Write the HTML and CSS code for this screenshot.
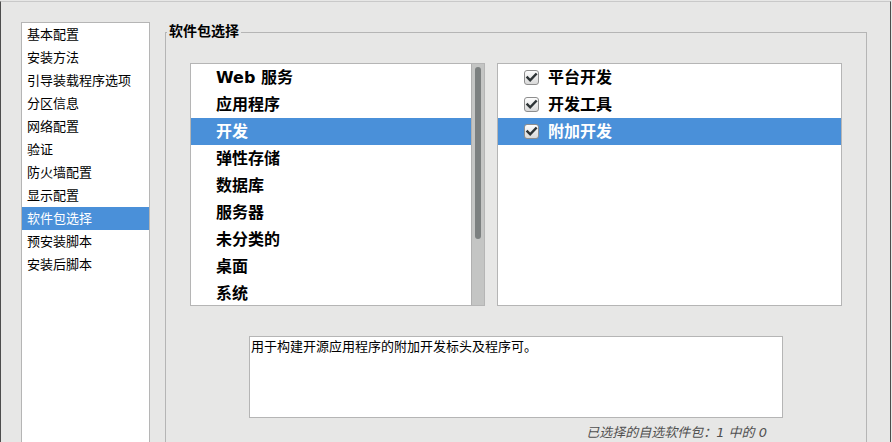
FILE: index.html
```html
<!DOCTYPE html>
<html lang="zh-CN">
<head>
<meta charset="utf-8">
<title>软件包选择</title>
<link rel="stylesheet" href="styles.css">
</head>
<body>
<div class="window">
  <ul class="nav">
    <li>基本配置</li>
    <li>安装方法</li>
    <li>引导装载程序选项</li>
    <li>分区信息</li>
    <li>网络配置</li>
    <li>验证</li>
    <li>防火墙配置</li>
    <li>显示配置</li>
    <li class="active">软件包选择</li>
    <li>预安装脚本</li>
    <li>安装后脚本</li>
  </ul>
  <div class="group">
    <div class="legend">软件包选择</div>
    <div class="lists">
      <div class="listbox groups">
        <ul class="items">
          <li>Web 服务</li>
          <li>应用程序</li>
          <li class="active">开发</li>
          <li>弹性存储</li>
          <li>数据库</li>
          <li>服务器</li>
          <li>未分类的</li>
          <li>桌面</li>
          <li>系统</li>
        </ul>
        <div class="scrollbar"><div class="thumb"></div></div>
      </div>
      <ul class="listbox options">
        <li><span class="check"><svg viewBox="0 0 13 13" width="13" height="13"><path d="M2.5 6.5 L5.2 9.3 L10.8 3.4" fill="none" stroke="#2e3436" stroke-width="2.5" stroke-linecap="square"/></svg></span>平台开发</li>
        <li><span class="check"><svg viewBox="0 0 13 13" width="13" height="13"><path d="M2.5 6.5 L5.2 9.3 L10.8 3.4" fill="none" stroke="#2e3436" stroke-width="2.5" stroke-linecap="square"/></svg></span>开发工具</li>
        <li class="active"><span class="check"><svg viewBox="0 0 13 13" width="13" height="13"><path d="M2.5 6.5 L5.2 9.3 L10.8 3.4" fill="none" stroke="#2e3436" stroke-width="2.5" stroke-linecap="square"/></svg></span>附加开发</li>
      </ul>
    </div>
    <div class="desc">用于构建开源应用程序的附加开发标头及程序可。</div>
    <div class="count">已选择的自选软件包：1 中的 0</div>
  </div>
</div>
</body>
</html>
```
FILE: styles.css
```css
html, body {
  margin: 0;
  padding: 0;
  background: #e7e7e6;
}
body {
  width: 892px;
  height: 442px;
  overflow: hidden;
  font-family: "DejaVu Sans", "Noto Sans CJK SC", sans-serif;
  color: #000;
}
.window {
  box-sizing: border-box;
  width: 891px;
  height: 441px;
  margin-top: 1px;
  border-top: 1px solid #c9c9c9;
  border-left: 1px solid #4d4d4d;
  border-right: 1px solid #4d4d4d;
  padding-left: 20px;
  display: flex;
  align-items: flex-start;
  overflow: hidden;
}
.nav {
  list-style: none;
  margin: 20px 0 0;
  padding: 0;
  width: 127px;
  height: 440px;
  flex: none;
  background: #fff;
  border: 1px solid #b5b5b5;
  font-family: "Noto Sans CJK SC", sans-serif;
  font-size: 13px;
}
.nav li {
  box-sizing: border-box;
  height: 23px;
  line-height: 21px;
  padding-left: 5px;
  white-space: nowrap;
}
.nav li.active {
  background: #4a90d9;
  color: #fff;
}
.group {
  position: relative;
  flex: none;
  width: 652px;
  height: 440px;
  margin: 30px 0 0 15px;
  padding: 30px 24px 0;
  border: 1px solid #b5b5b5;
}
.legend {
  position: absolute;
  top: -11px;
  left: 1px;
  padding: 0 2px;
  background: #e7e7e6;
  font-family: "Noto Sans CJK SC", sans-serif;
  font-weight: bold;
  font-size: 14px;
  line-height: 17px;
}
.lists {
  display: flex;
  gap: 12px;
  height: 243px;
}
.listbox {
  box-sizing: border-box;
  height: 243px;
  background: #fff;
  border: 1px solid #b5b5b5;
  margin: 0;
  padding: 0;
  list-style: none;
}
.groups {
  width: 295px;
  display: flex;
}
.items {
  flex: 1;
  list-style: none;
  margin: 0;
  padding: 0;
  font-weight: bold;
  font-size: 16px;
}
.items li,
.options li {
  height: 27px;
  line-height: 27px;
  white-space: nowrap;
}
.items li {
  padding-left: 25px;
}
.items li.active,
.options li.active {
  background: #4a90d9;
  color: #fff;
}
.scrollbar {
  flex: none;
  width: 12px;
  border-left: 1px solid #b0b0b0;
  background: #c4c5c4;
  padding-top: 3px;
  box-sizing: content-box;
}
.thumb {
  width: 6px;
  height: 172px;
  margin-left: 3px;
  border-radius: 3px;
  background: #7c8080;
}
.options {
  width: 345px;
  font-weight: bold;
  font-size: 16px;
}
.options li {
  display: flex;
  align-items: center;
  gap: 9px;
  padding-left: 26px;
}
.check {
  box-sizing: border-box;
  width: 15px;
  height: 15px;
  flex: none;
  display: flex;
  align-items: center;
  justify-content: center;
  border: 1px solid #8e8e8e;
  border-radius: 3px;
  background: linear-gradient(#fdfdfd, #d9d9d9);
}
.desc {
  box-sizing: border-box;
  width: 534px;
  height: 82px;
  margin: 30px 0 0 59px;
  padding: 1px;
  background: #fff;
  border: 1px solid #b5b5b5;
  font-family: "Noto Sans CJK SC", sans-serif;
  font-size: 13px;
  line-height: 15px;
}
.count {
  margin: 7px 75px 0 0;
  text-align: right;
  font-family: "DejaVu Sans", "Noto Sans CJK SC", sans-serif;
  font-style: italic;
  font-size: 13px;
  line-height: 16px;
  color: #505050;
}
```
